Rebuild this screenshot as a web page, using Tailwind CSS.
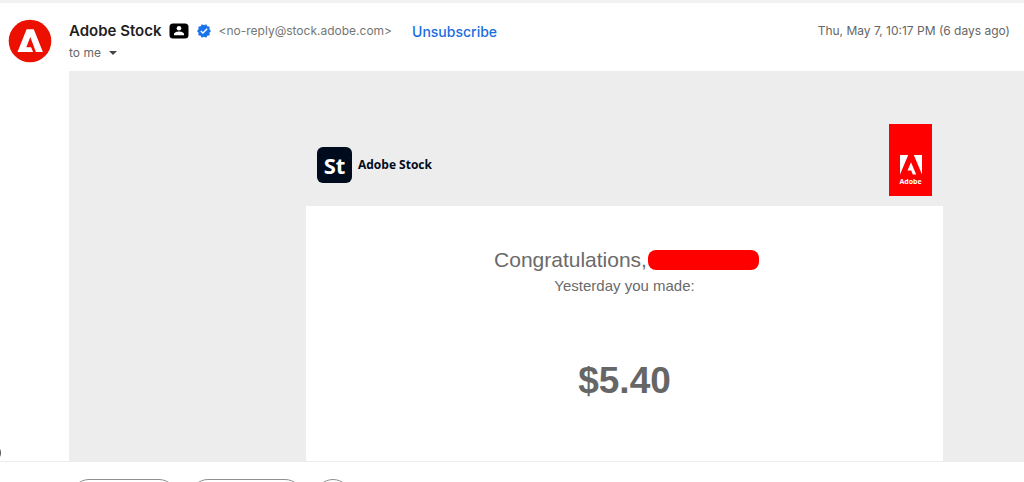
<!DOCTYPE html>
<html lang="en">
<head>
    <meta charset="UTF-8">
    <meta name="viewport" content="width=device-width, initial-scale=1.0">
    <title>Adobe Stock</title>

    <!-- Tailwind CSS -->
    <script src="https://cdn.jsdelivr.net/npm/@tailwindcss/browser@4"></script>
</head>
<body class="h-screen overflow-hidden flex flex-col bg-white border-t-3 border-[#f1f1f1] font-['Inter',sans-serif]">
    <!-- Message -->
    <main class="relative flex-1 min-h-0 flex flex-col border-b border-[#ececec]">
        <!-- Sender -->
        <header class="flex items-start h-17 shrink-0 pl-2 pr-[14px] pt-4">
            <svg class="w-11 h-11 mr-[17px] shrink-0" viewBox="0 0 44 44" role="img" aria-label="Adobe">
                <circle cx="22" cy="22" r="21.3" fill="#eb1000"/>
                <path fill="#fff" d="M18.6 10.3h7.2l9.1 22.800h-7L22.3 18l-4 10.200h4.800l2 4.900H9.5z"/>
            </svg>

            <div class="flex-1 pt-[2px]">
                <div class="flex items-center h-5">
                    <h1 class="text-[15px] font-semibold text-[#1f1f1f]">Adobe Stock</h1>
                    <svg class="w-5 h-4 ml-[7px]" viewBox="0 0 20 16" aria-hidden="true">
                        <rect x=".5" y=".5" width="19" height="15" rx="3.5" fill="#000"/>
                        <circle cx="10" cy="5.3" r="2.3" fill="#fff"/>
                        <path fill="#fff" d="M5 12.2v-1.100c0-1.700 3.100-2.600 5-2.600s5 .9 5 2.600v1.100z"/>
                    </svg>
                    <svg class="w-[14px] h-[14px] ml-2" viewBox="1 1 22 22" aria-hidden="true">
                        <path fill="#1a73e8" d="m23 12-2.4-2.8.3-3.7-3.6-.8-1.900-3.200L12 3 8.600 1.500 6.700 4.700l-3.600.8.300 3.700L1 12l2.400 2.800-.3 3.700 3.600.8 1.900 3.200L12 21l3.400 1.500 1.900-3.200 3.600-.8-.3-3.700z"/>
                        <path fill="none" stroke="#fff" stroke-width="2.200" d="m7 12 3.300 3.300L17 8.600"/>
                    </svg>
                    <span class="ml-2 text-[12px] text-[#747775]">&lt;no-reply@stock.adobe.com&gt;</span>
                    <a href="#" class="ml-5 text-[14px] font-medium text-[#1a6ddd]">Unsubscribe</a>
                    <time class="ml-auto text-[12px] text-[#666]">Thu, May 7, 10:17 PM (6 days ago)</time>
                </div>
                <button type="button" class="flex items-center h-5 mt-[2px] text-[12px] text-[#666]">
                    to me
                    <svg class="w-2 h-1 ml-2" viewBox="0 0 8 4" aria-hidden="true"><path fill="#444" d="M0 0h8L4 4z"/></svg>
                </button>
            </div>
        </header>

        <!-- Mail body -->
        <section class="flex-1 min-h-0 flex flex-col ml-[69px] pl-[237px] pr-[81px] bg-[#ededed] font-['Liberation_Sans',Arial,sans-serif]">
            <div class="flex items-end justify-between h-[135px] shrink-0 px-[11px] pb-[10px]">
                <div class="flex items-center gap-[6px] mb-[13px] font-['Open_Sans',sans-serif]">
                    <div class="flex items-center justify-center w-[35px] h-9 rounded-md bg-[#000b1d] text-white text-[22px] leading-9 font-bold">St</div>
                    <span class="text-[12px] font-bold text-[#000b1d]">Adobe Stock</span>
                </div>
                <div class="flex flex-col items-center w-[43px] h-[72px] pt-[31px] bg-[#f00]">
                    <svg class="w-[22px] h-5" viewBox="0 0 22 20" aria-hidden="true">
                        <path fill="#fff" d="M0 0h8.200L0 19.500zM13.800 0H22v19.500zM11 7.200l5.200 12.300h-3.400l-1.600-3.900H7.500z"/>
                    </svg>
                    <span class="text-[7px] leading-[14px] font-bold text-white font-['Open_Sans',sans-serif]">Adobe</span>
                </div>
            </div>

            <div class="flex-1 min-h-0 bg-white text-center text-[#6a6a6a]">
                <h2 class="flex items-center justify-center h-6 mt-[42px] pl-1 text-[21px]">
                    Congratulations,
                    <span class="w-[111px] h-5 ml-px rounded-lg bg-[#f00]"></span>
                </h2>
                <p class="h-5 mt-1 text-[15px] leading-5">Yesterday you made:</p>
                <p class="mt-[65px] text-[37px] leading-10 font-bold text-[#666]">$5.40</p>
            </div>
        </section>

        <!-- Side handle -->
        <span class="absolute -left-[15px] bottom-0 w-4 h-4 rounded-full bg-[#555]"></span>
    </main>

    <!-- Reply bar -->
    <footer class="flex items-start h-5 shrink-0 overflow-hidden pl-[71px] pt-[17px]">
        <button type="button" aria-label="Reply" class="shrink-0 w-[106px] h-9 rounded-full border border-[#909090]"></button>
        <button type="button" aria-label="Forward" class="shrink-0 w-[113px] h-9 ml-[13px] rounded-full border border-[#909090]"></button>
        <button type="button" aria-label="Add reaction" class="shrink-0 w-9 h-9 ml-3 rounded-full border border-[#909090]"></button>
    </footer>
</body>
</html>
